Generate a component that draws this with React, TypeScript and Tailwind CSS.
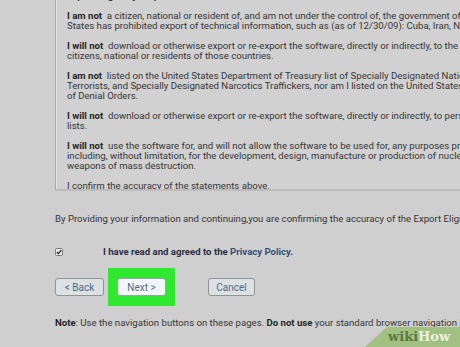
import React from "react";

const Bold = ({ children }: { children: React.ReactNode }) => (
  <span className="font-bold text-[#262626]">{children}</span>
);

const Line = ({ children }: { children: React.ReactNode }) => (
  <div className="whitespace-nowrap h-[10px] leading-[10px]">{children}</div>
);

export default function App() {
  return (
    <div
      className="relative w-[460px] h-[347px] overflow-hidden bg-[#cfcfcf] text-[#363636] text-[9.6px]"
      style={{ fontFamily: "Roboto, 'Liberation Sans', sans-serif" }}
    >
      {/* scroll box */}
      <div className="ml-[55px] h-[191px] overflow-hidden border-l border-l-[#a9a9a9] border-b-2 border-b-[#bdbdbd] bg-[#d1d1d1] pl-[11px] shadow-[inset_1px_0_0_#e4e4e4]">
        <div className="-mt-[9px] flex flex-col gap-[10px]">
          <Line>
            <span className="font-bold">Export Eligibility Requirements - Please confirm</span>
          </Line>
          <div>
            <Line>
              <Bold>I am not</Bold>&nbsp; a citizen, national or resident of, and am not under the control of, the government of any country to which the United
            </Line>
            <Line>
              States has prohibited export of technical information, such as (as of 12/30/09): Cuba, Iran, North Korea, Sudan, Syria
            </Line>
          </div>
          <div>
            <Line>
              <Bold>I will not</Bold>&nbsp; download or otherwise export or re-export the software, directly or indirectly, to the above mentioned countries nor to
            </Line>
            <Line>citizens, national or residents of those countries.</Line>
          </div>
          <div>
            <Line>
              <Bold>I am not</Bold>&nbsp; listed on the United States Department of Treasury list of Specially Designated Nationals and Blocked Persons
            </Line>
            <Line>
              Terrorists, and Specially Designated Narcotics Traffickers, nor am I listed on the United States Department of Commerce Table
            </Line>
            <Line>of Denial Orders.</Line>
          </div>
          <div>
            <Line>
              <Bold>I will not</Bold>&nbsp; download or otherwise export or re-export the software, directly or indirectly, to persons on the above mentioned
            </Line>
            <Line>lists.</Line>
          </div>
          <div>
            <Line>
              <Bold>I will not</Bold>&nbsp; use the software for, and will not allow the software to be used for, any purposes prohibited by United States law,
            </Line>
            <Line>
              including, without limitation, for the development, design, manufacture or production of nuclear, chemical or biological
            </Line>
            <Line>weapons of mass destruction.</Line>
          </div>
          <div>
            <Line>I confirm the accuracy of the statements above.</Line>
          </div>
        </div>
      </div>

      {/* by providing */}
      <div className="ml-[55px] mt-[23px] whitespace-nowrap leading-[10px]">
        By Providing your information and continuing,you are confirming the accuracy of the Export Eligibility Requirements.
      </div>

      {/* checkbox row */}
      <div className="ml-[55px] mt-[23px] flex items-center h-[10px]">
        <div className="w-[8px] h-[8px] rounded-[1.5px] border border-[#7a7a7a] bg-[#e6e6e6] flex items-center justify-center">
          <svg width="6" height="6" viewBox="0 0 6 6">
            <path d="M0.8 3.1 L2.4 4.6 L5.2 1.2" fill="none" stroke="#222" strokeWidth="1.3" />
          </svg>
        </div>
        <div className="ml-[40px] font-bold text-[#2b2f45] whitespace-nowrap">
          I have read and agreed to the <span className="text-[#33507a]">Privacy Policy</span>.
        </div>
      </div>

      {/* buttons */}
      <div className="ml-[55px] mt-[11px] flex items-center h-[38px]">
        <div className="w-[49px] h-[18px] rounded-[3px] border border-[#8f9499] bg-[#dde1e4] flex items-center justify-center text-[#4f6b86] text-[10px]">
          &lt; Back
        </div>
        <div className="ml-[4px] w-[67px] h-[38px] bg-[#30e830] flex items-center justify-center">
          <div className="w-[49px] h-[18px] rounded-[3px] border border-[#9aa3aa] bg-[#f3f6f8] flex items-center justify-center text-[#4f6b86] text-[10px]">
            Next &gt;
          </div>
        </div>
        <div className="ml-[33px] w-[47px] h-[18px] rounded-[3px] border border-[#8f9499] bg-[#dde1e4] flex items-center justify-center text-[#4f6b86] text-[10px]">
          Cancel
        </div>
      </div>

      {/* note */}
      <div className="ml-[55px] mt-[12px] whitespace-nowrap leading-[10px]">
        <Bold>Note</Bold>: Use the navigation buttons on these pages. <Bold>Do not use</Bold> your standard browser navigation buttons.
      </div>

      {/* wikiHow badge */}
      <div className="absolute right-0 bottom-0 w-[95px] h-[20px]">
        <svg width="95" height="20" viewBox="0 0 95 20" className="absolute inset-0">
          <polygon points="22,0 95,0 95,20 0,20" fill="#a2c082" />
        </svg>
        <div
          className="absolute left-[23px] top-[3px] flex items-baseline text-[13px] font-bold leading-[14px]"
          style={{ fontFamily: "'DejaVu Serif', 'Liberation Serif', serif" }}
        >
          <span className="text-[#5a7a40]">wiki</span>
          <span className="text-[#eaf2e2]">How</span>
        </div>
      </div>
    </div>
  );
}
